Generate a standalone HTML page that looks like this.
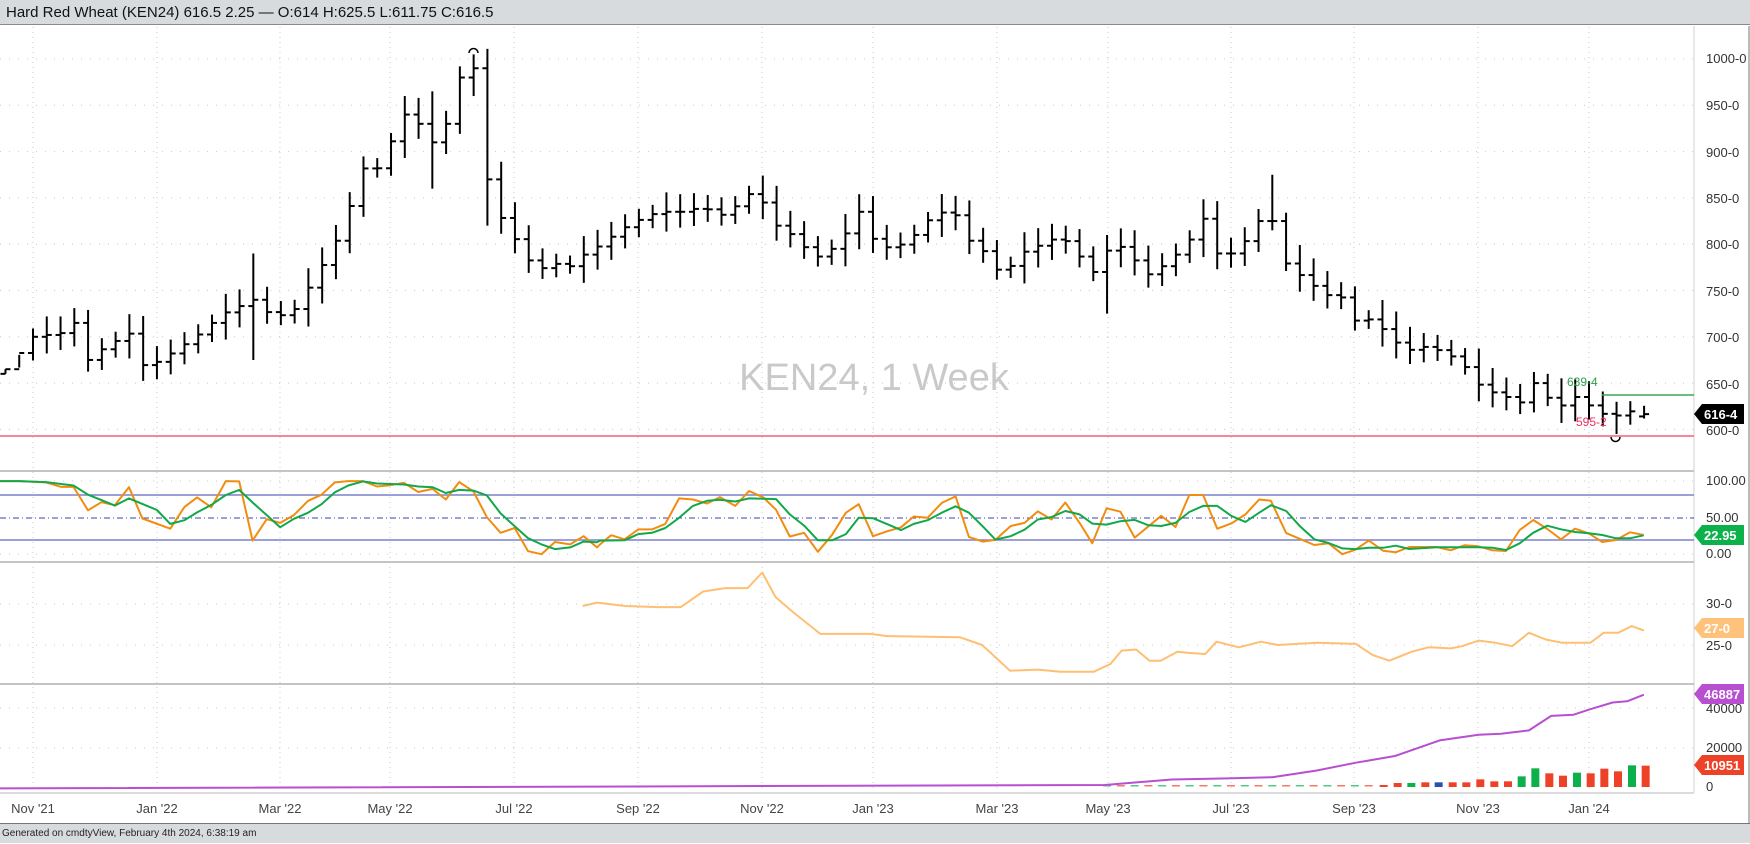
<!DOCTYPE html>
<html><head><meta charset="utf-8">
<style>
html,body{margin:0;padding:0;width:1750px;height:843px;overflow:hidden;background:#fff;font-family:"Liberation Sans",sans-serif}
#hdr{position:absolute;left:0;top:0;width:1750px;height:25px;background:#d8dbde;border-bottom:1px solid #8a8a8a;font-size:15px;line-height:26px;color:#111;padding-left:6px;box-sizing:border-box}
#ftr{position:absolute;left:0;top:823px;width:1750px;height:20px;background:#d8dbde;border-top:1px solid #777;font-size:10px;line-height:20px;color:#222;padding-left:2px;box-sizing:border-box}
svg{position:absolute;left:0;top:0}
</style></head><body>
<div id="hdr">Hard Red Wheat (KEN24) 616.5 2.25 — O:614 H:625.5 L:611.75 C:616.5</div>
<svg id="s" width="1750" height="823" xmlns="http://www.w3.org/2000/svg" font-family="Liberation Sans, sans-serif">
<text x="874" y="390" font-size="38" fill="#c9c9c9" text-anchor="middle">KEN24, 1 Week</text>
<g font-size="13" fill="#333">
<text x="1706" y="63">1000-0</text><text x="1706" y="110">950-0</text><text x="1706" y="157">900-0</text>
<text x="1706" y="203">850-0</text><text x="1706" y="249">800-0</text><text x="1706" y="296">750-0</text>
<text x="1706" y="342">700-0</text><text x="1706" y="389">650-0</text><text x="1706" y="435">600-0</text>
<text x="1706" y="485">100.00</text><text x="1706" y="522">50.00</text><text x="1706" y="558">0.00</text>
<text x="1706" y="608">30-0</text><text x="1706" y="650">25-0</text>
<text x="1706" y="713">40000</text><text x="1706" y="752">20000</text><text x="1706" y="791">0</text>
</g>
<g font-size="13" fill="#444" text-anchor="middle">
<text x="33" y="813">Nov '21</text><text x="157" y="813">Jan '22</text><text x="280" y="813">Mar '22</text>
<text x="390" y="813">May '22</text><text x="514" y="813">Jul '22</text><text x="638" y="813">Sep '22</text>
<text x="762" y="813">Nov '22</text><text x="873" y="813">Jan '23</text><text x="997" y="813">Mar '23</text>
<text x="1108" y="813">May '23</text><text x="1231" y="813">Jul '23</text><text x="1354" y="813">Sep '23</text>
<text x="1478" y="813">Nov '23</text><text x="1589" y="813">Jan '24</text>
</g>
</svg>
<div id="ftr">Generated on cmdtyView, February 4th 2024, 6:38:19 am</div>
<script>
var s=document.getElementById('s'),NS='http://www.w3.org/2000/svg';
function el(t,a,p){var e=document.createElementNS(NS,t);for(var k in a)e.setAttribute(k,a[k]);(p||s).appendChild(e);return e;}
function line(x1,y1,x2,y2,c,w,d){var a={x1:x1,y1:y1,x2:x2,y2:y2,stroke:c,'stroke-width':w||1};if(d)a['stroke-dasharray']=d;return el('line',a);}
function poly(pts,c,w){return el('polyline',{points:pts.map(function(p){return p[0].toFixed(1)+','+p[1].toFixed(1)}).join(' '),fill:'none',stroke:c,'stroke-width':w,'stroke-linejoin':'round'});}
var vx=[33,157,280,390,514,638,762,873,997,1108,1231,1354,1478,1589];
vx.forEach(function(x){line(x,27,x,793,'#c8c8c8',1,'1,4');});
function py(p){return 59+(1000-p)*0.926;}
for(var p=600;p<=1000;p+=50)line(0,py(p),1694,py(p),'#c8c8c8',1,'1,8');
[481,554,604,645,708,748].forEach(function(y){line(0,y,1694,y,'#c8c8c8',1,'1,8');});
line(1694,26,1694,793,'#d0d0d0',1);
[471,562,684].forEach(function(y){line(0,y,1694,y,'#c4c4c4',2);});
line(0,793,1694,793,'#dcdcdc',2);
line(1749,26,1749,823,'#777',1);
line(0,495,1694,495,'#7a82cc',1.5);line(0,540,1694,540,'#7a82cc',1.5);
line(0,518,1694,518,'#3844b0',1,'6,3,1,3');
var kf=[[-2,665],[0,700],[2.5,705],[3,715],[4,675],[5.3,690],[7.2,705],[8.1,665],[9.8,680],[11.8,700],[13.8,725],[16,740],[17.5,720],[19,730],[20.3,760],[21.9,800],[23.1,845],[24.2,890],[25.2,880],[26.1,915],[27,940],[28,930],[29,910],[30,930],[31,980],[32,990],[33,870],[34.2,820],[35.3,800],[36.5,770],[37.7,780],[38.9,775],[40.1,790],[41.3,800],[42.6,815],[43.8,825],[45.4,835],[47,835],[48.6,840],[50.3,830],[51.9,855],[53,845],[54,820],[55.1,810],[56.8,785],[58,795],[59.2,815],[60,835],[61.2,800],[62.4,795],[63.7,805],[64.9,825],[66.1,835],[67.3,830],[68.1,800],[69.3,790],[70.1,770],[70.9,775],[72.2,795],[73.4,800],[74.6,810],[75.8,790],[77,770],[78.3,800],[79.5,795],[80.7,765],[81.9,775],[83.1,790],[84.3,810],[85.1,830],[85.9,790],[87.2,790],[88.4,810],[89.2,830],[90,825],[91.2,770],[92.4,765],[93.6,745],[94.9,745],[96.1,715],[97.3,720],[98.5,700],[99.7,685],[101.3,690],[102.9,680],[104.2,665],[105.4,640],[106.6,640],[107.8,625],[109,650],[109.9,635],[111.1,625],[112,635],[113.1,625],[114.2,615],[115.1,615],[116.1,620],[117,616.5]];
function interp(k,i){for(var j=0;j<k.length-1;j++){if(i>=k[j][0]&&i<=k[j+1][0]){var t=(i-k[j][0])/(k[j+1][0]-k[j][0]);return k[j][1]+t*(k[j+1][1]-k[j][1]);}}return k[k.length-1][1];}
var prev=660,g=el('g',{stroke:'#000','stroke-width':2});
var special={16:[790,675],32:[1005,960],29:[965,860],90:[875,815],115:[625,595],33:[880,820],78:[810,725]};
for(var i=-2;i<=117;i++){
 var c=interp(kf,i),o=prev,x=33+i*13.77;
 var r=9+((i*37)%13),hi=Math.max(o,c)+r,lo=Math.min(o,c)-r*0.9;
 if(special[i]){hi=Math.max(hi,special[i][0]);lo=Math.min(lo,special[i][1]);}
 if(i==117){o=614;hi=625.5;lo=611.75;c=616.5;}
 el('line',{x1:x,y1:py(hi),x2:x,y2:py(lo)},g);
 el('line',{x1:x-5,y1:py(o),x2:x,y2:py(o)},g);
 el('line',{x1:x,y1:py(c),x2:x+5,y2:py(c)},g);
 prev=c;
}
el('path',{d:'M469,53 a4.5,4.5 0 0 1 9,0',fill:'none',stroke:'#000','stroke-width':1.5});
el('path',{d:'M1611,437 a4.5,4.5 0 0 0 9,0',fill:'none',stroke:'#000','stroke-width':1.5});
line(0,436,1694,436,'#f0607a',1.5);
line(1602,395,1694,395,'#3aa655',1.5);
var t=el('text',{x:1567,y:386,'font-size':12,fill:'#2e9e4f'});t.textContent='639-4';
t=el('text',{x:1576,y:426,'font-size':12,fill:'#ee3060'});t.textContent='595-2';
function z8(a){return a.map(function(p){return [p[0]/2.613,460+p[1]/2.94];});}
function z9(a){return a.map(function(p){return [600+p[0]/1.96,460+p[1]/2.94];});}
function z2(a){return a.map(function(p){return [1380+p[0]/3,520+p[1]/3];});}
var o8=[[0,62],[50,62],[120,66],[160,79],[192,79],[230,148],[265,124],[300,133],[337,80],[372,172],[445,202],[482,138],[515,110],[552,139],[590,62],[625,63],[660,237],[697,174],[732,185],[768,162],[805,120],[840,102],[875,66],[910,62],[948,62],[985,78],[1020,74],[1055,67],[1093,94],[1130,85],[1165,116],[1200,65],[1237,92],[1272,168],[1308,214],[1345,200],[1380,268],[1415,277],[1450,241],[1490,248],[1525,224],[1560,257]];
var g8=[[0,62],[50,62],[120,65],[192,75],[230,102],[265,118],[300,134],[337,113],[372,129],[410,147],[445,188],[482,177],[515,154],[552,132],[590,103],[625,88],[660,125],[697,162],[732,198],[768,173],[805,155],[840,130],[875,95],[910,75],[948,63],[985,69],[1055,72],[1093,78],[1130,80],[1165,97],[1200,88],[1237,90],[1272,104],[1308,157],[1345,195],[1380,230],[1415,248],[1450,262],[1490,257],[1525,240],[1560,242]];
var o9=[[0,248],[22,221],[48,233],[75,204],[102,204],[128,188],[155,113],[182,116],[210,128],[235,109],[265,135],[292,91],[320,110],[345,146],[372,225],[400,214],[427,270],[455,220],[482,155],[507,130],[535,224],[562,210],[590,198],[615,166],[642,170],[670,126],[697,107],[723,226],[750,240],[775,235],[805,194],[832,185],[858,151],[885,175],[912,125],[940,185],[965,245],[993,142],[1020,152],[1048,228],[1075,195],[1100,164],[1128,197],[1155,103],[1182,103],[1210,202],[1238,186],[1265,160],[1292,116],[1315,120],[1345,215],[1372,232],[1400,250],[1428,245],[1455,277],[1480,264],[1507,237],[1535,267]];
var g9=[[0,237],[48,236],[75,218],[102,214],[128,200],[155,170],[182,135],[210,120],[235,117],[265,122],[292,113],[320,114],[345,115],[372,160],[400,193],[427,236],[455,236],[482,218],[507,170],[535,171],[562,188],[590,206],[615,188],[642,177],[670,155],[697,136],[723,155],[750,195],[775,234],[805,224],[832,205],[858,175],[885,168],[912,150],[940,160],[965,187],[993,190],[1020,180],[1048,176],[1075,192],[1100,194],[1128,185],[1155,153],[1182,135],[1210,135],[1238,165],[1265,182],[1292,155],[1315,133],[1345,150],[1372,195],[1400,233],[1428,244],[1455,260],[1480,262],[1507,258],[1535,258]];
var o2=[[47,97],[88,81],[170,81],[212,91],[253,76],[295,79],[337,91],[378,93],[419,30],[460,0],[502,27],[543,58],[585,26],[626,40],[667,66],[708,60],[750,37],[791,45]];
var g2=[[47,77],[88,87],[170,82],[253,82],[295,82],[337,83],[378,90],[419,70],[460,38],[502,17],[543,28],[585,36],[626,40],[667,45],[708,55],[750,55],[791,46]];
poly(z8(o8).concat(z9(o9)).concat(z2(o2)),'#f28c0f',2);
poly(z8(g8).concat(z9(g9)).concat(z2(g2)),'#12a84a',2);
var op=[[522,543],[535,540],[560,543],[590,544],[610,544],[630,530],[650,527],[670,527],[683,513],[695,535],[710,548],[735,568],[780,568],[795,570],[860,571],[880,578],[905,601],[930,600],[950,602],[980,602],[995,595],[1005,583],[1018,582],[1030,592],[1040,592],[1055,584],[1065,585],[1080,586],[1090,575],[1110,580],[1130,575],[1145,578],[1180,576],[1215,577],[1230,587],[1245,592],[1265,584],[1280,580],[1300,581],[1310,579],[1325,574],[1340,576],[1355,579],[1370,567],[1385,573],[1400,576],[1425,576],[1437,567],[1450,567],[1462,561],[1473,565]];
poly(op.map(function(p){return [p[0]*1.116,p[1]*1.116];}),'#ffbf73',2);
var vb=[[5,797,'r'],[47,791,'r'],[88,791,'g'],[130,789,'r'],[170,789,'b'],[212,789,'r'],[253,789,'r'],[295,780,'r'],[337,786,'r'],[378,786,'r'],[419,771,'g'],[460,747,'g'],[502,762,'r'],[543,769,'r'],[585,760,'g'],[626,762,'r'],[667,748,'r'],[708,756,'r'],[750,738,'g'],[791,739,'r']];
var col={r:'#ee4228',g:'#0db14b',b:'#2a4fb0'};
for(var i=78;i<=97;i++){var x=33+i*13.77;el('rect',{x:x-4,y:785,width:8,height:1.5,fill:(i%2?'#ee4228':'#0db14b'),opacity:0.7});}
vb.forEach(function(b){var x=1380+b[0]/3+2,h=(803-b[1])/3;el('rect',{x:x-4,y:787-h,width:8,height:h,fill:col[b[2]]});});
var pp=[[0,706],[990,703],[1050,698],[1100,697],[1140,696],[1180,690],[1215,683],[1250,677],[1290,663],[1325,658],[1345,657],[1370,654],[1390,641],[1410,640],[1425,635],[1445,629],[1458,628],[1473,622]];
poly(pp.map(function(p){return [p[0]*1.116,p[1]*1.116+0.5];}),'#b84fd0',2);
function tag(y,txt,bg,fg){el('path',{d:'M1694,'+y+' l8,-10 h42 v20 h-42 z',fill:bg});var t=el('text',{x:1704,y:y+5,'font-size':13,'font-weight':'bold',fill:fg||'#fff'});t.textContent=txt;}
tag(414,'616-4','#000');tag(535,'22.95','#0db14b');tag(628,'27-0','#ffc27a');tag(694,'46887','#b84fd0');tag(765,'10951','#ee4228');
</script>
</body></html>
